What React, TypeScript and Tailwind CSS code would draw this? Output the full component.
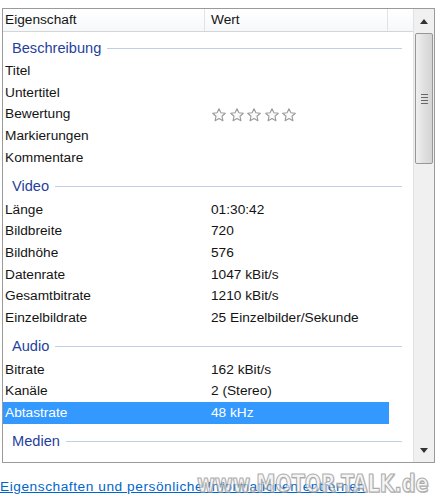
import React from "react";

type Row = { k: string; v?: string; stars?: boolean; sel?: boolean };
type Group = { title: string; first?: boolean; rows: Row[] };

const groups: Group[] = [
  {
    title: "Beschreibung",
    first: true,
    rows: [
      { k: "Titel" },
      { k: "Untertitel" },
      { k: "Bewertung", stars: true },
      { k: "Markierungen" },
      { k: "Kommentare" },
    ],
  },
  {
    title: "Video",
    rows: [
      { k: "Länge", v: "01:30:42" },
      { k: "Bildbreite", v: "720" },
      { k: "Bildhöhe", v: "576" },
      { k: "Datenrate", v: "1047 kBit/s" },
      { k: "Gesamtbitrate", v: "1210 kBit/s" },
      { k: "Einzelbildrate", v: "25 Einzelbilder/Sekunde" },
    ],
  },
  {
    title: "Audio",
    rows: [
      { k: "Bitrate", v: "162 kBit/s" },
      { k: "Kanäle", v: "2 (Stereo)" },
      { k: "Abtastrate", v: "48 kHz", sel: true },
    ],
  },
  { title: "Medien", rows: [] },
];

function Star() {
  return (
    <svg width="16" height="16" viewBox="0 0 24 24" className="shrink-0">
      <path
        d="M12 2.5l2.9 6.2 6.6.7-5 4.5 1.4 6.6L12 17.2l-5.9 3.3 1.4-6.6-5-4.5 6.6-.7z"
        fill="#fbfbfb"
        stroke="#9a9a9a"
        strokeWidth="1.6"
        strokeLinejoin="round"
      />
    </svg>
  );
}

export default function App() {
  return (
    <div
      className="relative w-[436px] h-[500px] bg-white overflow-hidden text-[#141414]"
      style={{ fontFamily: '"Liberation Sans", Arial, sans-serif' }}
    >
      <div className="h-[8px]" />
      <div className="ml-[2px] w-[433px] h-[455px] border border-[#9a9a9a] flex">
        {/* content */}
        <div className="w-[410px] flex flex-col">
          {/* header */}
          <div className="h-[23px] flex items-center border-b border-[#d5d5d5] bg-gradient-to-b from-white to-[#f7f8fa] text-[13.7px]">
            <div className="w-[202px] h-full flex items-center pl-[2px] border-r border-[#e3e3e3]">
              Eigenschaft
            </div>
            <div className="w-[183px] h-full flex items-center pl-[6px] border-r border-[#e3e3e3]">
              Wert
            </div>
            <div className="flex-1" />
          </div>
          {/* body */}
          <div className="flex flex-col">
            {groups.map((g) => (
              <div key={g.title} className="flex flex-col">
                <div
                  className={`${g.first ? "h-[28px] pt-[4px]" : "h-[30px] pt-[6px]"} flex items-center pl-[9px] pr-[11px]`}
                >
                  <span className="text-[14.6px] text-[#1f3f9e] leading-none">{g.title}</span>
                  <div className="flex-1 ml-[6px] h-px bg-[#c3cde4]" />
                </div>
                {g.rows.map((r) => (
                  <div
                    key={r.k}
                    className={`h-[21.7px] flex items-center text-[13.7px] w-[386px] ${
                      r.sel ? "bg-[#3399ff] text-white" : ""
                    }`}
                  >
                    <div className="w-[208px] pl-[2px] pt-[1px]">{r.k}</div>
                    <div className="flex-1 flex items-center pt-[1px]">
                      {r.stars ? (
                        <div className="flex gap-[1.5px]">
                          <Star />
                          <Star />
                          <Star />
                          <Star />
                          <Star />
                        </div>
                      ) : (
                        r.v
                      )}
                    </div>
                  </div>
                ))}
              </div>
            ))}
          </div>
        </div>
        {/* scrollbar */}
        <div className="flex-1 flex flex-col bg-[#f0f0f0] border-l border-[#e2e2e2]">
          <div className="h-[24px] flex items-center justify-center">
            <svg width="8" height="5" viewBox="0 0 8 5">
              <path d="M0 5L4 0L8 5z" fill="#333" />
            </svg>
          </div>
          <div className="h-[131px] mx-[1px] rounded-[2px] border border-[#979797] bg-gradient-to-r from-[#f0f0f0] via-[#e0e0e0] to-[#d4d4d4] flex items-center justify-center">
            <div className="flex flex-col gap-[2px]">
              <div className="w-[7px] h-px bg-[#666]" />
              <div className="w-[7px] h-px bg-[#666]" />
              <div className="w-[7px] h-px bg-[#666]" />
              <div className="w-[7px] h-px bg-[#666]" />
            </div>
          </div>
          <div className="flex-1" />
          <div className="h-[23px] flex items-center justify-center">
            <svg width="8" height="5" viewBox="0 0 8 5">
              <path d="M0 0L4 5L8 0z" fill="#333" />
            </svg>
          </div>
        </div>
      </div>
      <div className="mt-[14px] text-[13.7px] tracking-[0.55px] text-[#0066cc] underline whitespace-nowrap">
        Eigenschaften und persönliche Informationen entfernen
      </div>
      <div
        className="absolute right-[7px] top-[472px] font-bold text-[24px] leading-none text-[#f2f2f2] opacity-70 whitespace-nowrap scale-x-[0.8] origin-right"
        style={{
          WebkitTextStroke: "1.2px #8a8a8a",
          textShadow: "1px 1px 0 #b0b0b0",
          fontFamily: '"DejaVu Sans", sans-serif',
        }}
      >
        www.MOTOR-TALK.de
      </div>
    </div>
  );
}
